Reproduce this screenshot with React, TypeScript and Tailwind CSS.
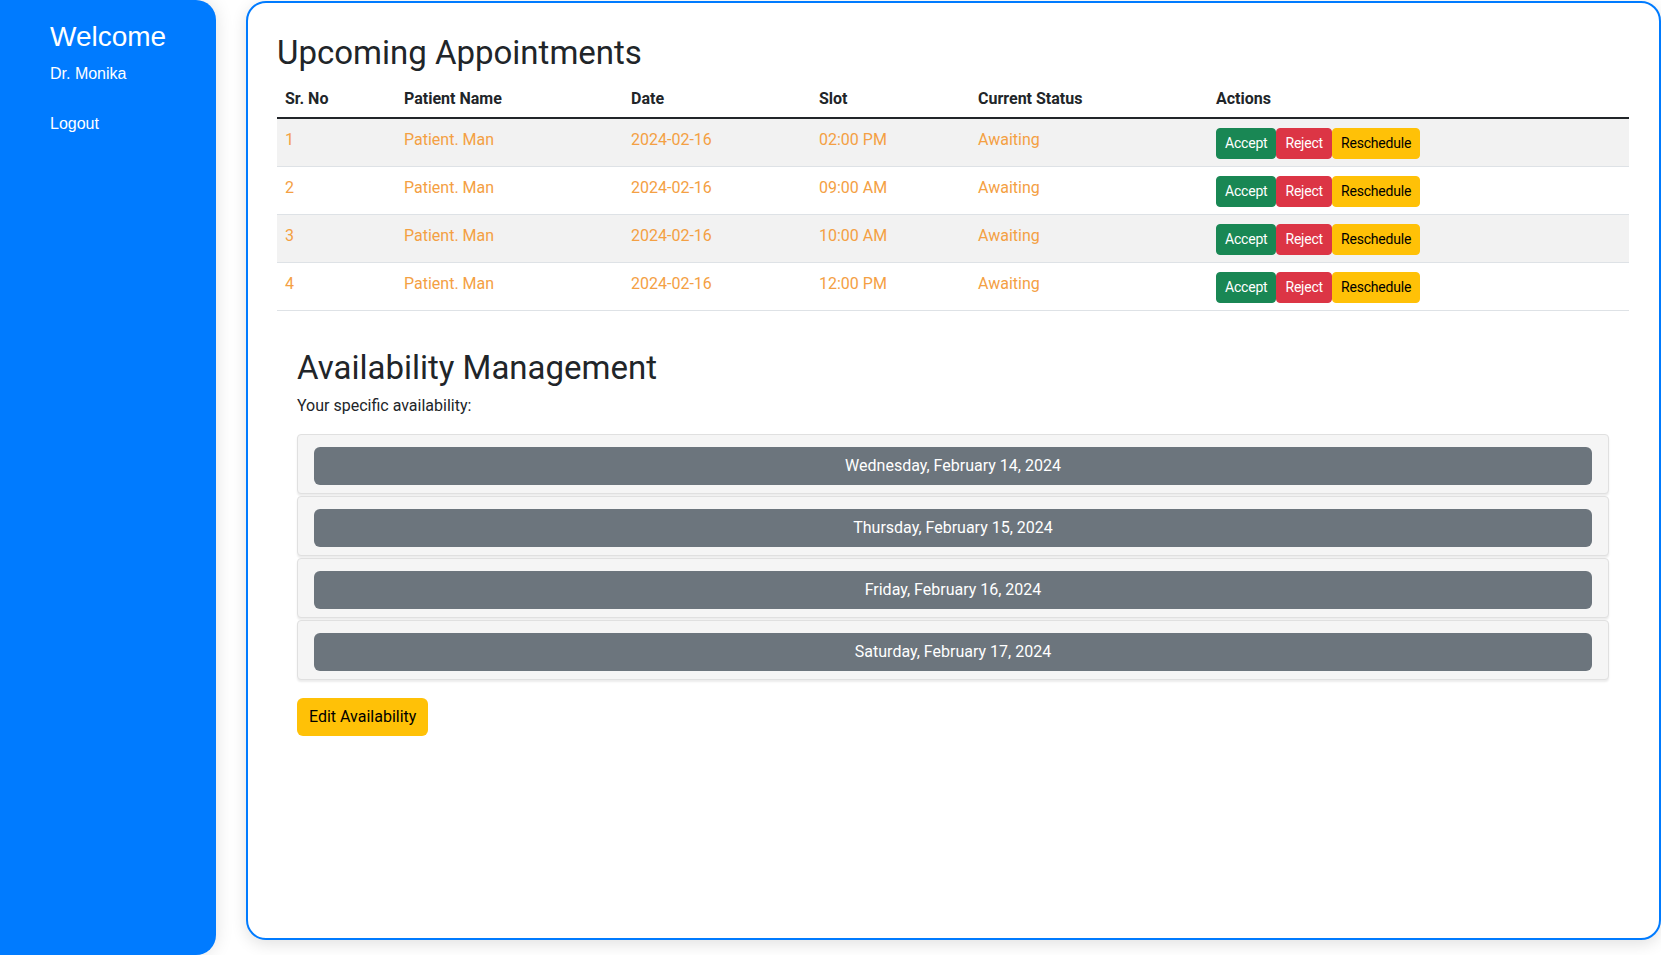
import React from 'react';

interface Appointment {
  id: number;
  patient: string;
  date: string;
  slot: string;
  status: string;
}

const appointments: Appointment[] = [
  { id: 1, patient: 'Patient. Man', date: '2024-02-16', slot: '02:00 PM', status: 'Awaiting' },
  { id: 2, patient: 'Patient. Man', date: '2024-02-16', slot: '09:00 AM', status: 'Awaiting' },
  { id: 3, patient: 'Patient. Man', date: '2024-02-16', slot: '10:00 AM', status: 'Awaiting' },
  { id: 4, patient: 'Patient. Man', date: '2024-02-16', slot: '12:00 PM', status: 'Awaiting' },
];

const availability = [
  'Wednesday, February 14, 2024',
  'Thursday, February 15, 2024',
  'Friday, February 16, 2024',
  'Saturday, February 17, 2024',
];

const Sidebar: React.FC = () => (
  <aside className="w-[216px] h-[955px] shrink-0 bg-[#007bff] rounded-r-[20px] shadow-[0_0_18px_rgba(0,0,0,0.12)] pl-[50px] pt-5 text-white font-['Liberation_Sans',Arial,sans-serif]">
    <h2 className="text-[28px] leading-[1.2]">Welcome</h2>
    <p className="mt-2 text-base leading-6">Dr. Monika</p>
    <a className="block mt-[26px] text-base leading-6 cursor-pointer">Logout</a>
  </aside>
);

const AppointmentsTable: React.FC = () => (
  <table className="w-full table-fixed border-collapse text-[#212529] mb-4">
    <thead>
      <tr className="text-left font-bold border-b-2 border-[#212529]">
        <th className="w-[119px] px-2 pt-[10px] pb-[6px] font-bold">Sr. No</th>
        <th className="w-[227px] px-2 pt-[10px] pb-[6px] font-bold">Patient Name</th>
        <th className="w-[188px] px-2 pt-[10px] pb-[6px] font-bold">Date</th>
        <th className="w-[159px] px-2 pt-[10px] pb-[6px] font-bold">Slot</th>
        <th className="w-[238px] px-2 pt-[10px] pb-[6px] font-bold">Current Status</th>
        <th className="px-2 pt-[10px] pb-[6px] font-bold">Actions</th>
      </tr>
    </thead>
    <tbody>
      {appointments.map((a, i) => (
        <tr
          key={a.id}
          className={`border-b border-[#dee2e6] text-[#f4a043] align-top ${i % 2 === 0 ? 'bg-[#f2f2f2]' : 'bg-white'}`}
        >
          <td className="px-2 pt-[9px] pb-[7px]">{a.id}</td>
          <td className="px-2 pt-[9px] pb-[7px]">{a.patient}</td>
          <td className="px-2 pt-[9px] pb-[7px]">{a.date}</td>
          <td className="px-2 pt-[9px] pb-[7px]">{a.slot}</td>
          <td className="px-2 pt-[9px] pb-[7px]">{a.status}</td>
          <td className="px-2 pt-[9px] pb-[7px]">
            <div className="flex tracking-[-0.2px]">
              <button className="px-2 py-1 text-sm leading-[21px] border border-[#198754] bg-[#198754] text-white rounded-[4px]">
                Accept
              </button>
              <button className="px-2 py-1 text-sm leading-[21px] border border-[#dc3545] bg-[#dc3545] text-white rounded-[4px]">
                Reject
              </button>
              <button className="px-2 py-1 text-sm leading-[21px] border border-[#ffc107] bg-[#ffc107] text-black rounded-[4px]">
                Reschedule
              </button>
            </div>
          </td>
        </tr>
      ))}
    </tbody>
  </table>
);

const AvailabilitySection: React.FC = () => (
  <section className="p-5 text-[#212529]">
    <h2 className="mt-[2px] text-[33px] leading-[38px] font-normal mb-[7px]">Availability Management</h2>
    <p className="mb-4 text-base leading-6">Your specific availability:</p>
    <div className="mb-[18px]">
      {availability.map((day) => (
        <div
          key={day}
          className="mb-[2px] bg-[#f5f5f5] border border-[#e0e0e0] rounded-[4px] shadow-[0_2px_2px_rgba(0,0,0,0.08)] px-4 pt-3 pb-2"
        >
          <button className="w-full h-[38px] bg-[#6c757d] text-white text-base rounded-[6px]">
            {day}
          </button>
        </div>
      ))}
    </div>
    <button className="px-3 h-[38px] bg-[#ffc107] text-black text-base rounded-[6px]">
      Edit Availability
    </button>
  </section>
);

export default function App() {
  return (
    <div className="flex w-[1661px] h-[955px] overflow-hidden bg-white font-['Roboto','Segoe_UI',sans-serif]">
      <Sidebar />
      <main className="ml-[30px] mt-[1px] h-[939px] flex-1 bg-white border-2 border-[#007bff] rounded-[20px] shadow-[0_4px_16px_rgba(0,0,0,0.12)] pl-[29px] pr-[30px] pt-[31px]">
        <h2 className="text-[33px] leading-[38px] font-normal text-[#212529] mb-[5px]">Upcoming Appointments</h2>
        <AppointmentsTable />
        <AvailabilitySection />
      </main>
    </div>
  );
}
